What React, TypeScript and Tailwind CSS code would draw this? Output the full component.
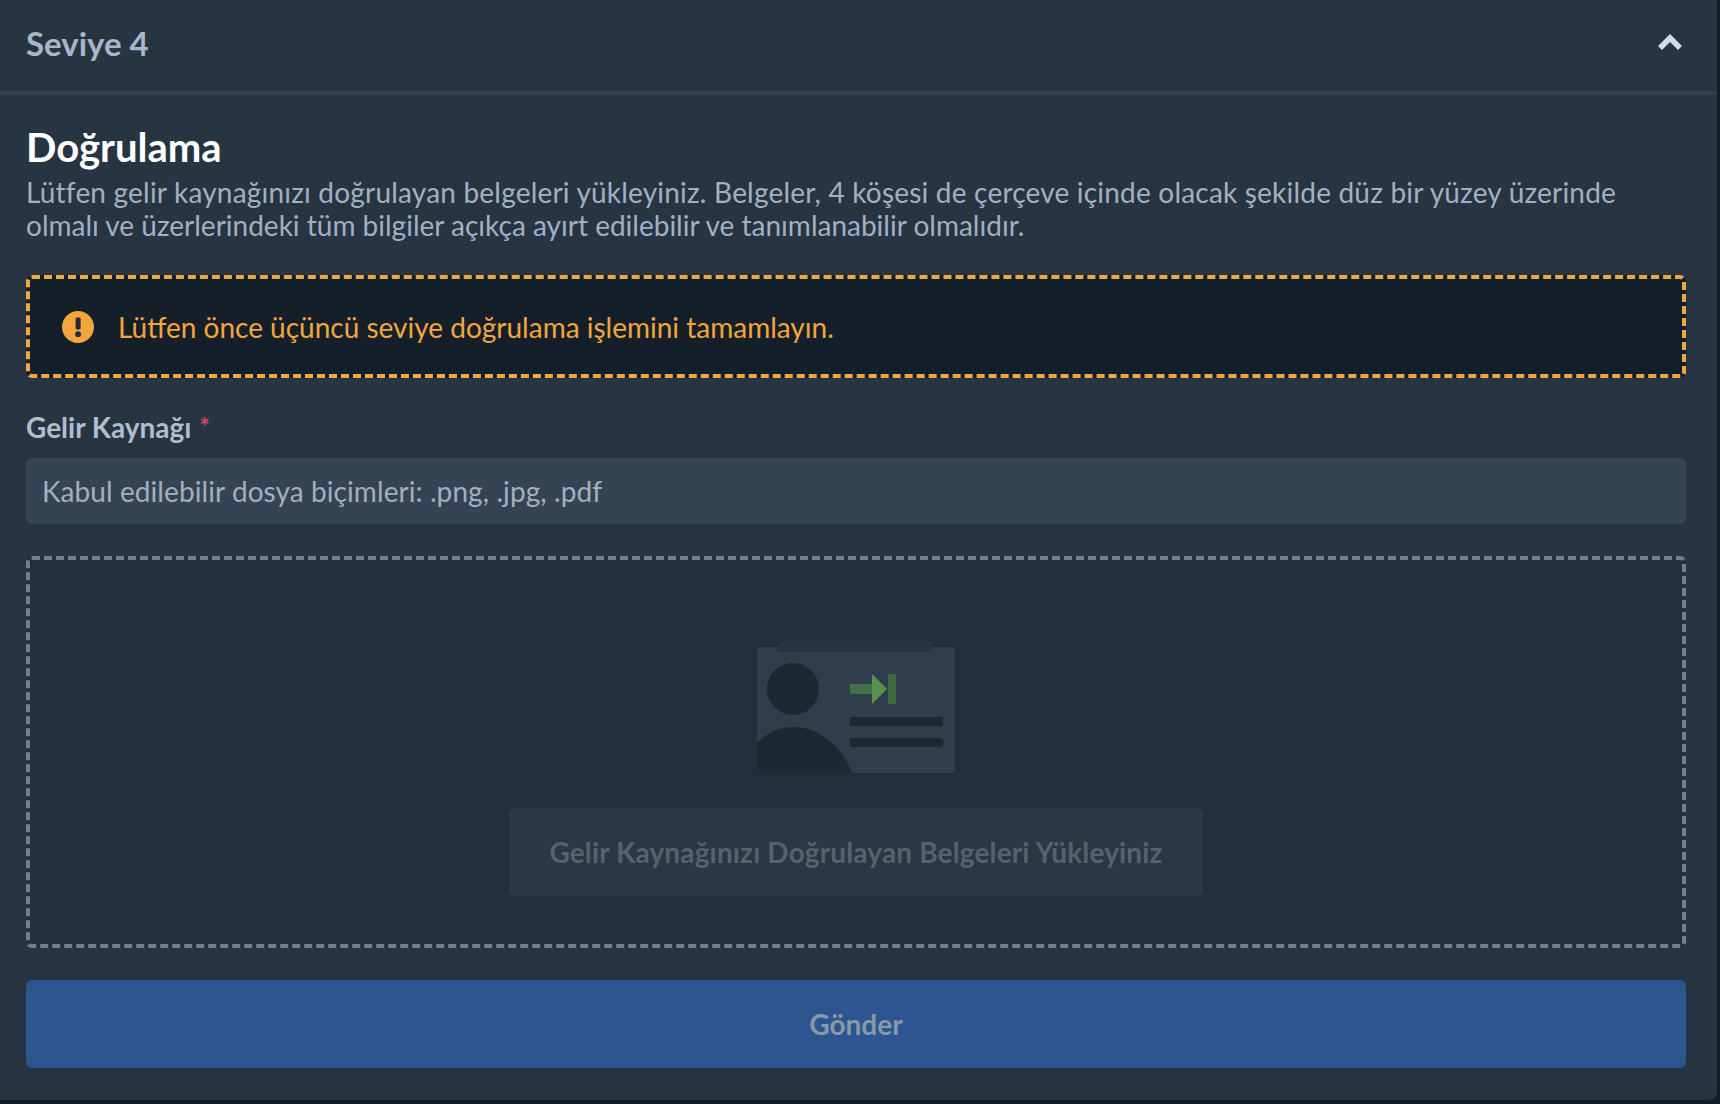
export default function App() {
  return (
    <div className="min-h-[1104px] w-full bg-[#131e28] font-['Lato','Noto_Sans',sans-serif]">
      <div className="h-[1100px] w-[1717px] rounded-br-[8px] bg-[#273543]">
        <div className="flex h-[95px] items-center justify-between border-b-4 border-[#344251] pb-[4px] pl-[26px] pr-[34px]">
          <span className="text-[33px] font-bold text-[#a9b6ca]">Seviye 4</span>
          <svg className="mb-[4px]" width="26" height="18" viewBox="0 0 26 18" fill="none" aria-hidden="true">
            <path d="M3 15L13 5L23 15" stroke="#d3deeb" strokeWidth="5.5" />
          </svg>
        </div>
        <div className="pl-[26px] pr-[31px]">
          <h1 className="mb-[4px] mt-[27px] text-[40px] font-bold leading-[50px] text-white">Doğrulama</h1>
          <p className="text-[28px] leading-[33px] tracking-[0.2px] text-[#a3b0c4]">
            Lütfen gelir kaynağınızı doğrulayan belgeleri yükleyiniz. Belgeler, 4 köşesi de çerçeve içinde olacak şekilde düz bir yüzey üzerinde{" "}
            <span className="tracking-normal">olmalı ve üzerlerindeki tüm bilgiler açıkça ayırt edilebilir ve tanımlanabilir olmalıdır.</span>
          </p>
          <div className="mt-[33px] flex h-[103px] items-center gap-[24px] rounded-[6px] border-4 border-dashed border-[#f2a63b] bg-[#141f2a] pl-[32px]">
            <svg width="32" height="32" viewBox="0 0 32 32" aria-hidden="true">
              <circle cx="16" cy="16" r="16" fill="#f2a63b" />
              <rect x="13.6" y="6.5" width="5" height="12" rx="1.4" fill="#1f2c39" />
              <circle cx="16.1" cy="23.2" r="2.9" fill="#1f2c39" />
            </svg>
            <span className="text-[28px] text-[#f2a63b]">Lütfen önce üçüncü seviye doğrulama işlemini tamamlayın.</span>
          </div>
          <div className="mt-[31px] flex items-center gap-[8px] text-[28px] font-bold leading-[36px] text-[#b1bdd0]">
            Gelir Kaynağı
            <span className="text-[24px] text-[#d8475f]">*</span>
          </div>
          <div className="mt-[13px] flex h-[66px] items-center rounded-[6px] bg-[#344454] pl-[16px] text-[28px] tracking-[0.08px] text-[#a3afc0]">
            Kabul edilebilir dosya biçimleri: .png, .jpg, .pdf
          </div>
          <div className="mt-[32px] flex h-[392px] flex-col items-center rounded-[6px] border-4 border-dashed border-[#72808e] bg-[#222e3b] pt-[81px]">
            <svg width="198" height="132" viewBox="0 0 198 132" aria-hidden="true">
              <rect x="0" y="6" width="198" height="126" rx="4" fill="#303d4b" />
              <path d="M22 0H176L173 11H20Z" fill="#283442" />
              <circle cx="36" cy="48" r="26" fill="#1c2934" />
              <path d="M0 102C10 92 22 86 36 86C62 86 84 104 95 132H5C2 132 0 130 0 127Z" fill="#1c2934" />
              <rect x="93" y="43" width="24" height="10" fill="#46704a" />
              <path d="M115 33L130 48L115 63Z" fill="#5a9150" />
              <rect x="131" y="33" width="8" height="30" fill="#3f6a3f" />
              <rect x="93" y="76" width="93" height="9" fill="#1c2934" />
              <path d="M93 97H182A4.5 4.5 0 0 1 182 106H93Z" fill="#1c2934" />
            </svg>
            <div className="mt-[35px] flex h-[88px] w-[694px] items-center justify-center rounded-[6px] bg-[#2a3744] text-[28px] font-bold tracking-[0.15px] text-[#556370]">
              Gelir Kaynağınızı Doğrulayan Belgeleri Yükleyiniz
            </div>
          </div>
          <div className="mt-[32px] flex h-[88px] items-center justify-center rounded-[6px] bg-[#2d5590] text-[28px] font-bold text-[#8b98a8]">
            Gönder
          </div>
        </div>
      </div>
    </div>
  );
}
